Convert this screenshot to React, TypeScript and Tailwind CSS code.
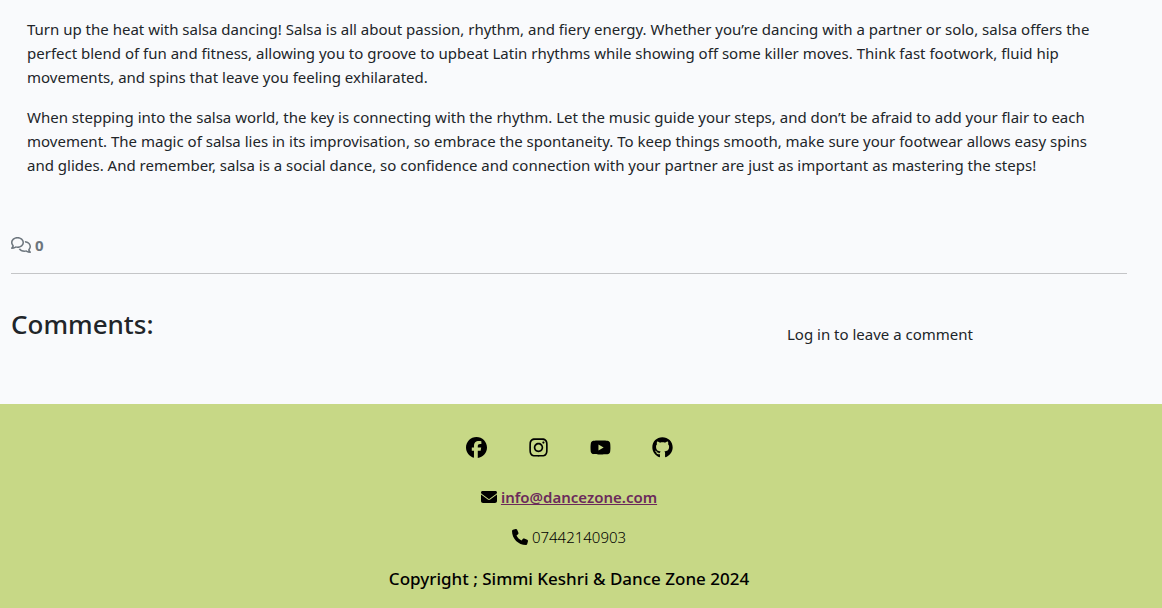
import React from "react";
import { FaFacebook, FaInstagram, FaYoutube, FaGithub, FaEnvelope, FaPhone, FaRegComments } from "react-icons/fa6";

const paragraphs = [
  "Turn up the heat with salsa dancing! Salsa is all about passion, rhythm, and fiery energy. Whether you’re dancing with a partner or solo, salsa offers the perfect blend of fun and fitness, allowing you to groove to upbeat Latin rhythms while showing off some killer moves. Think fast footwork, fluid hip movements, and spins that leave you feeling exhilarated.",
  "When stepping into the salsa world, the key is connecting with the rhythm. Let the music guide your steps, and don’t be afraid to add your flair to each movement. The magic of salsa lies in its improvisation, so embrace the spontaneity. To keep things smooth, make sure your footwear allows easy spins and glides. And remember, salsa is a social dance, so confidence and connection with your partner are just as important as mastering the steps!",
];

const socials = [
  { label: "Facebook", href: "https://facebook.com", Icon: FaFacebook },
  { label: "Instagram", href: "https://instagram.com", Icon: FaInstagram },
  { label: "YouTube", href: "https://youtube.com", Icon: FaYoutube },
  { label: "GitHub", href: "https://github.com", Icon: FaGithub },
];

export default function App() {
  return (
    <div className="flex min-h-screen flex-col bg-[#f9fafc] font-['Noto_Sans',sans-serif] text-[15px] leading-6 text-[#212529]">
      <main className="pr-[35px] pl-[11px]">
        <article className="space-y-4 px-4 pt-[17px]">
          {paragraphs.map((text) => (
            <p key={text}>{text}</p>
          ))}
        </article>
        <div className="mt-14 flex items-center gap-1 font-bold text-[#6c757d]">
          <FaRegComments className="h-4 w-5" />
          <span>0</span>
        </div>
        <hr className="mt-4 border-[#c4c5c7]" />
        <section className="grid grid-cols-3 pt-8 pb-[58px]">
          <h2 className="col-span-2 text-[26px] leading-9 font-medium">Comments:</h2>
          <p className="pt-4 pl-8">Log in to leave a comment</p>
        </section>
      </main>
      <footer className="flex-1 bg-[#c7d886] pt-[33px] pr-6 text-center text-black">
        <nav className="flex justify-center gap-[41px]" aria-label="Social links">
          {socials.map(({ label, href, Icon }) => (
            <a key={label} href={href} aria-label={label}>
              <Icon className="h-[21px] w-auto" />
            </a>
          ))}
        </nav>
        <p className="mt-[27px] flex items-center justify-center gap-1">
          <FaEnvelope className="size-4" />
          <a href="mailto:info@dancezone.com" className="font-semibold text-[#6b2a5b] underline">info@dancezone.com</a>
        </p>
        <p className="mt-4 flex items-center justify-center gap-1 font-light">
          <FaPhone className="size-4" />
          07442140903
        </p>
        <p className="mt-[18px] pb-4 text-[17px] font-medium">Copyright ; Simmi Keshri &amp; Dance Zone 2024</p>
      </footer>
    </div>
  );
}
